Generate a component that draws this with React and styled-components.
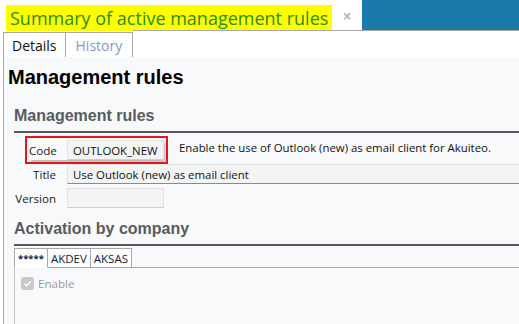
import React from 'react'
import styled, { createGlobalStyle } from 'styled-components'

const Global = createGlobalStyle`
  html, body {
    margin: 0;
    padding: 0;
    background: #fff;
    overflow: hidden;
  }
  body {
    width: 519px;
    height: 324px;
    font-family: "Open Sans", "Noto Sans", sans-serif;
  }
`

const Page = styled.div`
  width: 519px;
  height: 324px;
  display: flex;
  flex-direction: column;
  overflow: hidden;
`

const TopBar = styled.div`
  display: flex;
  align-items: flex-start;
  height: 33px;
`

const PageTitle = styled.div`
  margin: 5px 0 0 6px;
  height: 26px;
  padding: 0 4px;
  background: #ffff00;
  color: #2e8b1e;
  font-size: 18px;
  line-height: 26px;
  white-space: nowrap;
`

const Close = styled.div`
  width: 30px;
  height: 31px;
  display: flex;
  align-items: center;
  justify-content: center;
  color: #b8b8b8;
  font-size: 16px;
  font-weight: bold;
`

const BlueBlock = styled.div`
  margin-left: auto;
  width: 159px;
  height: 31px;
  background: #1a7aab;
`

const TabStrip = styled.div`
  display: flex;
  height: 26px;
  padding-left: 3px;
`

const Tab = styled.div`
  box-sizing: border-box;
  height: 26px;
  margin-top: 1px;
  padding: 0 ${p => p.$pad}px;
  display: flex;
  align-items: center;
  background: #fff;
  border: 1px solid #a9a9a9;
  border-left: ${p => (p.$first ? '1px solid #a9a9a9' : 'none')};
  border-bottom: ${p => (p.$active ? '1px solid #fff' : '1px solid #a9a9a9')};
  font-size: 14px;
  color: ${p => (p.$active ? '#111' : '#7f9cc6')};
`

const TabFill = styled.div`
  flex: 1;
  border-top: 1px solid #a9a9a9;
  border-bottom: 1px solid #a9a9a9;
  margin-top: -1px;
  height: 26px;
`

const Content = styled.div`
  flex: 1;
  margin-left: 3px;
  border-left: 1px solid #a9a9a9;
  background: #f8f9fb;
  padding: 8px 0 0 4px;
  display: flex;
  flex-direction: column;
`

const Heading = styled.h1`
  margin: 0;
  font-family: "Liberation Sans", Arial, sans-serif;
  font-weight: bold;
  font-size: 20px;
  line-height: 24px;
  color: #000;
`

const Section = styled.div`
  margin: ${p => p.$top}px 0 0 6px;
  display: flex;
  flex-direction: column;
`

const SectionTitle = styled.h2`
  margin: 0;
  font-family: "Liberation Sans", Arial, sans-serif;
  font-weight: bold;
  font-size: 16px;
  line-height: 20px;
  color: #595b60;
  padding-bottom: 5px;
  border-bottom: 2px solid #55575c;
`

const Form = styled.div`
  display: flex;
  flex-direction: column;
  gap: 4px;
  padding-top: 7px;
`

const Row = styled.div`
  display: flex;
  align-items: center;
  height: 20px;
`

const Highlight = styled.div`
  display: flex;
  align-items: center;
  margin-left: 15px;
  outline: 2px solid #e8141c;
  outline-offset: 2px;
  box-shadow: 2px 3px 3px rgba(0, 0, 0, 0.25);
`

const Label = styled.div`
  width: ${p => p.$w || 42}px;
  text-align: right;
  padding-right: 11px;
  font-size: 11.6px;
  color: #222;
`

const Field = styled.div`
  box-sizing: border-box;
  width: ${p => p.$w};
  height: 20px;
  padding: 0 5px;
  display: flex;
  align-items: center;
  background: #f4f4f4;
  border: 1px solid #e2e2e2;
  border-bottom: 1px solid ${p => (p.$dark ? '#8a8a8a' : '#cfcfcf')};
  border-right: ${p => (p.$open ? 'none' : '1px solid #e2e2e2')};
  font-size: 11.4px;
  color: #111;
  white-space: nowrap;
`

const Note = styled.div`
  margin-left: 15px;
  margin-top: -5px;
  font-size: 11.4px;
  color: #111;
  white-space: nowrap;
`

const SubTabs = styled.div`
  display: flex;
  margin-top: 2px;
  height: 20px;
`

const SubTab = styled.div`
  box-sizing: border-box;
  height: 20px;
  padding: 0 ${p => p.$pad}px;
  display: flex;
  align-items: center;
  background: #fff;
  border: 1px solid #a9a9a9;
  border-left: ${p => (p.$first ? '1px solid #a9a9a9' : 'none')};
  border-bottom: ${p => (p.$active ? '1px solid #fff' : '1px solid #a9a9a9')};
  font-size: ${p => (p.$active ? 9.5 : 11.5)}px;
  font-weight: ${p => (p.$active ? 'bold' : 'normal')};
  color: #10203f;
`

const SubTabFill = styled.div`
  flex: 1;
  border-bottom: 1px solid #a9a9a9;
`

const SubPanel = styled.div`
  border-left: 1px solid #c9c9c9;
  padding: 8px 0 0 6px;
  height: 60px;
`

const Check = styled.label`
  display: flex;
  align-items: center;
  gap: 4px;
  font-size: 11.6px;
  color: #9a9a9a;
`

const Box = styled.span`
  width: 13px;
  height: 13px;
  border-radius: 3px;
  background: #c9c9c9;
  display: flex;
  align-items: center;
  justify-content: center;
`

export default function App() {
  return (
    <Page>
      <Global />
      <TopBar>
        <PageTitle>Summary of active management rules</PageTitle>
        <Close>×</Close>
        <BlueBlock />
      </TopBar>
      <TabStrip>
        <Tab $first $active $pad={8}>Details</Tab>
        <Tab $pad={10}>History</Tab>
        <TabFill />
      </TabStrip>
      <Content>
        <Heading>Management rules</Heading>
        <Section $top={17}>
          <SectionTitle>Management rules</SectionTitle>
          <Form>
            <Row>
              <Highlight>
                <Label $w={27}>Code</Label>
                <Field $w="97px">OUTLOOK_NEW</Field>
              </Highlight>
              <Note>Enable the use of Outlook (new) as email client for Akuiteo.</Note>
            </Row>
            <Row>
              <Label>Title</Label>
              <Field $w="calc(100% - 53px)" $dark $open>Use Outlook (new) as email client</Field>
            </Row>
            <Row>
              <Label>Version</Label>
              <Field $w="97px" />
            </Row>
          </Form>
        </Section>
        <Section $top={11}>
          <SectionTitle>Activation by company</SectionTitle>
          <SubTabs>
            <SubTab $first $active $pad={3}>*****</SubTab>
            <SubTab $pad={3}>AKDEV</SubTab>
            <SubTab $pad={3}>AKSAS</SubTab>
            <SubTabFill />
          </SubTabs>
          <SubPanel>
            <Check>
              <Box>
                <svg width="9" height="9" viewBox="0 0 10 10">
                  <path d="M1.5 5.2 L4 7.6 L8.6 2.4" fill="none" stroke="#fff" strokeWidth="1.6" />
                </svg>
              </Box>
              Enable
            </Check>
          </SubPanel>
        </Section>
      </Content>
    </Page>
  )
}
